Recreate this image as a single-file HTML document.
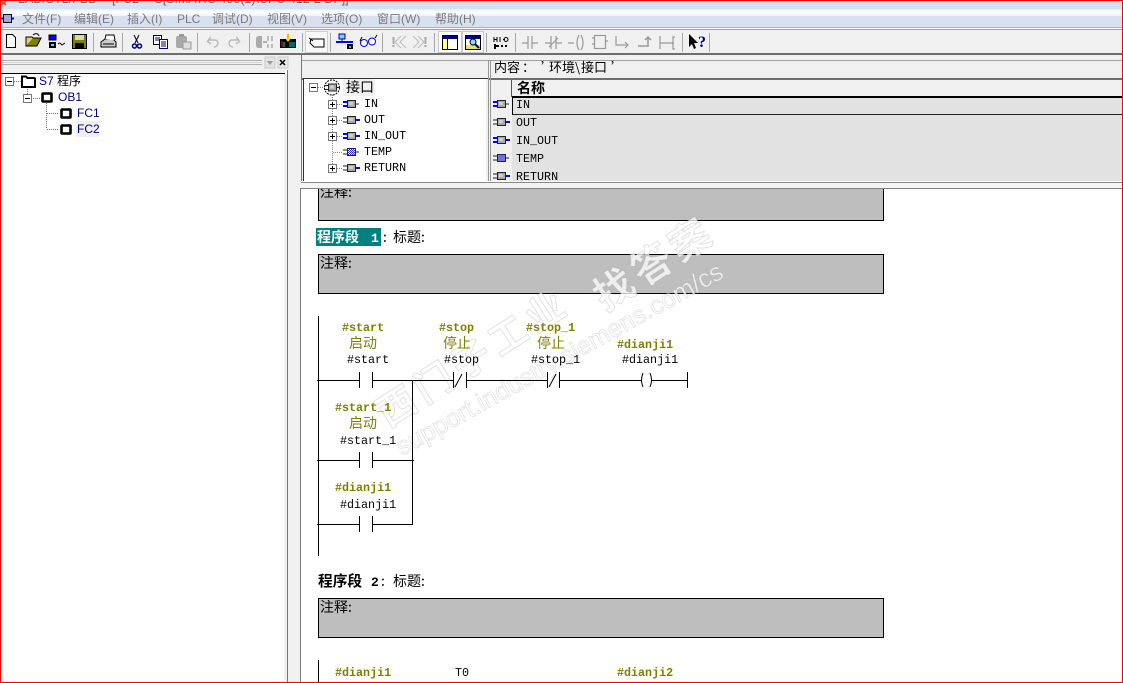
<!DOCTYPE html>
<html><head><meta charset="utf-8"><style>
html,body{margin:0;padding:0;background:#fff;width:1123px;height:683px;overflow:hidden}
svg{display:block;position:absolute;left:0;top:0}
text{white-space:pre}
.m{font:12px "Liberation Sans","Noto Sans CJK SC",sans-serif;fill:#7a7a7a}
.t{font:11.7px "Liberation Mono","Noto Sans CJK SC",monospace;fill:#000}
.b{font:bold 11.7px "Liberation Mono",monospace;fill:#808000}
.o{font:14px "WenQuanYi Zen Hei","Noto Sans CJK SC",sans-serif;fill:#808000}
.c{font:14px "WenQuanYi Zen Hei","Noto Sans CJK SC",sans-serif;fill:#000}
.s{font:12px "Liberation Sans","Noto Sans CJK SC",sans-serif;fill:#000080}
.l{stroke:#000;stroke-width:1;fill:none;shape-rendering:crispEdges}
.wm{fill:rgba(255,255,255,.75);stroke:rgba(150,150,150,.28);stroke-width:1;font-family:"Liberation Sans","Noto Sans CJK SC",sans-serif}
</style></head><body>
<svg width="1123" height="683" viewBox="0 0 1123 683" xmlns="http://www.w3.org/2000/svg">
<defs>
<linearGradient id="gl" x1="0" y1="0" x2="0" y2="1"><stop offset="0" stop-color="#e4edf5"/><stop offset=".45" stop-color="#fff"/><stop offset="1" stop-color="#eef1f9"/></linearGradient>
<g id="pin"><rect x="4.500" y="1.500" width="8" height="7" fill="#a8a8a8" stroke="#222" shape-rendering="crispEdges"/><rect x="6" y="3" width="4" height="3" fill="#d0d0d0"/><path d="M0 3h4M0 7h4M13 5h3" stroke="#222" fill="none" shape-rendering="crispEdges"/></g>
<g id="pinl"><path d="M0 3h5M0 7h5" stroke="#00f" stroke-width="2" fill="none" shape-rendering="crispEdges"/></g>
<g id="pinr"><path d="M12 5h5" stroke="#00f" stroke-width="2" fill="none" shape-rendering="crispEdges"/></g>
<pattern id="chk" width="2" height="2" patternUnits="userSpaceOnUse"><rect width="2" height="2" fill="#fff"/><rect width="1" height="1" fill="#22c"/><rect x="1" y="1" width="1" height="1" fill="#22c"/></pattern>
<g id="plus"><rect x=".5" y=".5" width="8" height="8" fill="#fff" stroke="#777" shape-rendering="crispEdges"/><path d="M2 4.500h5M4.500 2v5" stroke="#000" shape-rendering="crispEdges"/></g>
<g id="minus"><rect x=".5" y=".5" width="8" height="8" fill="#fff" stroke="#777" shape-rendering="crispEdges"/><path d="M2 4.500h5" stroke="#000" shape-rendering="crispEdges"/></g>
<rect id="sq" x="1.500" y="1.500" width="9" height="8" rx=".5" fill="#fff" stroke="#000" stroke-width="2.600"/>
</defs>

<!-- background -->
<rect width="1123" height="683" fill="#fff"/>
<rect y="0" width="1123" height="9" fill="#d6e2ee"/>
<rect y="9" width="1123" height="7" fill="url(#gl)"/>
<rect y="16" width="1123" height="11" fill="#d9e0f0"/>
<rect y="27" width="1123" height="1" fill="#b0b0b8"/>
<rect y="28" width="1123" height="1" fill="#fafafa"/>
<rect y="29" width="1123" height="1" fill="#a0a0a0"/>
<rect y="30" width="1123" height="23" fill="#f0f0f0"/>
<rect y="53" width="1123" height="2" fill="#6e6e6e"/>
<rect y="55" width="1123" height="134" fill="#f0f0f0"/>
<rect x="289" y="60" width="834" height="1" fill="#a0a0a0"/>
<rect x="289" y="78" width="834" height="2" fill="#6e6e6e"/>
<rect x="288" y="55" width="13" height="628" fill="#f0f0f0"/>

<!-- title -->
<text x="18" y="3" style="font:12.500px 'Liberation Sans',sans-serif;fill:#666">LAD/STL/FBD</text>
<text x="112" y="3" style="font:12.500px 'Liberation Sans',sans-serif;fill:#666">[FC2 -- S[SIMATIC 400(1)\CPU 412-2 DP]]</text>
<path d="M1 1l5 4M6 1l-5 4" stroke="#b85020" stroke-width="1.500"/>

<!-- menu -->
<rect x="3.500" y="14.500" width="8" height="8" fill="#a8a8c8" stroke="#111" shape-rendering="crispEdges"/>
<path d="M1 18.500h2.500M11.500 18.500h2.500" stroke="#00f" stroke-width="2"/>
<text class="m" x="22" y="23">文件(F)</text>
<text class="m" x="74" y="23">编辑(E)</text>
<text class="m" x="127" y="23">插入(I)</text>
<text class="m" x="177" y="23">PLC</text>
<text class="m" x="212" y="23">调试(D)</text>
<text class="m" x="267" y="23">视图(V)</text>
<text class="m" x="321" y="23">选项(O)</text>
<text class="m" x="377" y="23">窗口(W)</text>
<text class="m" x="435" y="23">帮助(H)</text>

<!-- toolbar separators -->
<g fill="#a8a8a8">
<rect x="93" y="33" width="1" height="19"/><rect x="122" y="33" width="1" height="19"/><rect x="197" y="33" width="1" height="19"/><rect x="249" y="33" width="1" height="19"/><rect x="302" y="33" width="1" height="19"/><rect x="330" y="33" width="1" height="19"/><rect x="382" y="33" width="1" height="19"/><rect x="434" y="33" width="1" height="19"/><rect x="486" y="33" width="1" height="19"/><rect x="515" y="33" width="1" height="19"/><rect x="682" y="33" width="1" height="19"/><rect x="709" y="33" width="1" height="19"/>
</g>

<!-- toolbar icons -->
<path d="M6.500 34.500h6l3 3v10h-9z" fill="#fff" stroke="#000"/>
<path d="M26 46l3-8h12l-4 8z" fill="#808000" stroke="#000"/><path d="M26 46v-9h6l1 1" fill="#e0d070" stroke="#000"/><path d="M33 35c2-2 5-2 6 1" stroke="#000" fill="none"/>
<rect x="49" y="35" width="7" height="5" fill="#00f" stroke="#000"/><rect x="49" y="42" width="7" height="6" fill="#000"/><rect x="51" y="44" width="3" height="2" fill="#0ff"/><path d="M58 44c2-2 3 0 4 1l3-2" stroke="#000" fill="none"/>
<rect x="72.500" y="34.500" width="14" height="14" fill="#808000" stroke="#000"/><rect x="75" y="35" width="9" height="5" fill="#d8d8b0"/><rect x="75" y="43" width="9" height="5" fill="#000"/>
<path d="M101 42l4-3h8l3 3v5h-15z" fill="#ccc" stroke="#000"/><path d="M105 39l1-4h8l1 5" fill="#fff" stroke="#000"/><path d="M103 44h11" stroke="#000"/>
<path d="M134 35l4 8M139 35l-4 8" stroke="#000"/><circle cx="134.500" cy="46" r="2" fill="none" stroke="#00008b" stroke-width="1.500"/><circle cx="139.500" cy="46" r="2" fill="none" stroke="#00008b" stroke-width="1.500"/>
<rect x="153.500" y="35.500" width="8" height="9" fill="#fff" stroke="#000"/><rect x="159.500" y="39.500" width="8" height="9" fill="#fff" stroke="#000080"/><path d="M155 38h5M155 40h4M161 42h5M161 44h5M161 46h5" stroke="#000080"/>
<rect x="176" y="36" width="11" height="12" rx="2" fill="#a8a8a8"/><rect x="183" y="42" width="8" height="7" fill="#ddd" stroke="#999"/><rect x="179" y="34" width="5" height="3" fill="#999"/>
<path d="M207 42l3-4v2h5c4 0 4 7-1 7M207 41l4 3" stroke="#bbb" stroke-width="1.500" fill="none"/>
<path d="M240 42l-3-4v2h-5c-4 0-4 7 1 7M240 41l-4 3" stroke="#bbb" stroke-width="1.500" fill="none"/>
<path d="M262 36h-3q-3 0-3 3v6q0 3 3 3h3z" fill="#aaa"/><path d="M263 42h4" stroke="#aaa" stroke-width="2"/><path d="M268 36v5M272 36v5M268 44v4M272 44v4" stroke="#aaa" stroke-width="1.500"/>
<rect x="280" y="39" width="16" height="9" fill="#000"/><path d="M288 34v6" stroke="#e8c000" stroke-width="2"/><path d="M285 38l3 4 3-4z" fill="#ffe000"/><path d="M282 41v6" stroke="#f00"/><path d="M284 42v5M290 42v5M292 42v5M294 42v5" stroke="#0cc"/>
<rect x="305.500" y="31.500" width="22" height="21" fill="#f8f8f8" stroke="#d0d0d0"/><path d="M311 39h13v8h-10l-4-4z" fill="#fff" stroke="#000"/><path d="M309 38l4 3" stroke="#000"/>
<rect x="339" y="34" width="6" height="5" fill="#8cf" stroke="#00008b"/><rect x="336" y="41" width="17" height="2" fill="#00f"/><path d="M342 39v3" stroke="#00f"/><rect x="347" y="44" width="6" height="5" fill="#000"/><rect x="349" y="46" width="2" height="2" fill="#0cc"/>
<circle cx="364" cy="43" r="3.500" fill="#fff" stroke="#00f"/><circle cx="372" cy="41.500" r="3.500" fill="#fff" stroke="#00f"/><path d="M360 41l2-4M375 38l2-3" stroke="#000"/>
<text x="391" y="47" style="font:bold 15px 'Liberation Sans',sans-serif;fill:#aaa">!</text>
<path d="M401 36l-6 6 6 6M406 36l-6 6 6 6M413 36l6 6-6 6M418 36l6 6-6 6" stroke="#bbb" fill="none"/>
<text x="423" y="47" style="font:bold 15px 'Liberation Sans',sans-serif;fill:#aaa">!</text>
<rect x="438.500" y="31.500" width="23" height="21" fill="#fbfbfb" stroke="#c8c8c8"/>
<rect x="462.500" y="31.500" width="21" height="21" fill="#fbfbfb" stroke="#c8c8c8"/>
<rect x="442.500" y="35.500" width="15" height="14" fill="#fff" stroke="#000"/><rect x="443" y="36" width="14" height="3" fill="#00008b"/><rect x="443" y="39" width="4" height="10" fill="#ffff80"/><path d="M447.500 39v10" stroke="#000"/>
<rect x="465.500" y="35.500" width="15" height="14" fill="#fff" stroke="#000"/><rect x="466" y="36" width="14" height="3" fill="#00008b"/><rect x="466" y="45" width="14" height="4" fill="#e8e060"/><circle cx="473" cy="42" r="3" fill="#8df" stroke="#000"/><path d="M475 44l4 4" stroke="#008" stroke-width="2"/>
<path d="M494 37v5M497 37v5M494 39.500h3M500 37v5M503 39.500h2" stroke="#000"/><circle cx="506" cy="39.500" r="2" fill="none" stroke="#000"/>
<rect x="494" y="44" width="2" height="5" fill="#000"/><path d="M496 46h3M501 46h2M505 46h2" stroke="#000" stroke-width="2"/>
<g stroke="#999" fill="none" stroke-width="1.200">
<path d="M522 43h6M528 36v13M532 36v13M532 43h6"/>
<path d="M545 43h6M551 36v13M556 36v13M556 43h6M549 47l9-9"/>
<path d="M568 43h6M579 35q-4 8 0 15M581 35q4 8 0 15"/>
<rect x="594.500" y="35.500" width="11" height="13"/><path d="M592 38h2M592 44h2M606 41h2"/>
<path d="M616 36v9h12M625 42l3 3-3 3"/>
<path d="M638 46h10v-9M645 40l3-3 3 3" stroke-width="1.500"/>
<path d="M660 36v13M660 43h14M675 37h-2v12h2"/>
</g>
<text x="698" y="47" style="font:bold 16px 'Liberation Serif',serif;fill:#000080">?</text>
<path d="M689 34v13l3-3 2 5 2-1-2-5h4z" fill="#000"/>

<!-- left pane -->
<rect x="2" y="60" width="260" height="1" fill="#b0b0b0"/><rect x="2" y="62" width="260" height="1" fill="#d8d8d8"/><rect x="2" y="64" width="260" height="1" fill="#b0b0b0"/>
<rect x="265" y="57" width="10" height="11" fill="#e4e4e4" stroke="#ccc"/><path d="M267 61h6l-3 4z" fill="#999"/>
<rect x="278" y="57" width="10" height="11" fill="#e8e8e8" stroke="#ccc"/><path d="M280 60l5 5M285 60l-5 5" stroke="#000" stroke-width="1.500"/>
<rect x="0" y="70" width="287" height="613" fill="#fff"/>
<rect x="0" y="69" width="285" height="4" fill="#f0f0f0"/>
<rect x="0" y="73" width="285" height="1" fill="#000"/>
<rect x="284" y="74" width="3" height="609" fill="#f0f0f0"/>
<rect x="287" y="70" width="1" height="613" fill="#777"/>
<path d="M14 81.500h7M27.500 87v7M33 98.500h8M46.500 103v26M47 113.500h12M47 129.500h12" stroke="#777" stroke-dasharray="1 1" fill="none" shape-rendering="crispEdges"/>
<use href="#minus" x="5" y="77"/>
<path d="M22 87V76.500h4l1.500 1.500h6.500q1 0 1 1v8z" fill="#fff" stroke="#000" stroke-width="2"/>
<text x="39" y="85" style="font:12px 'Liberation Sans','Noto Sans CJK SC',sans-serif;fill:#000"><tspan fill="#000080">S7</tspan> 程序</text>
<use href="#minus" x="23" y="94"/>
<use href="#sq" x="41" y="92"/><text class="s" x="58" y="101">OB1</text>
<use href="#sq" x="60" y="108"/><text class="s" x="77" y="117">FC1</text>
<rect x="76" y="121" width="23" height="16" fill="#f0f0f0"/>
<use href="#sq" x="60" y="124"/><text class="s" x="77" y="133">FC2</text>

<!-- upper right: separators -->
<rect x="301" y="55" width="1" height="128" fill="#777"/>
<rect x="303" y="78" width="185" height="103" fill="#fff"/>
<rect x="303" y="78" width="185" height="1" fill="#333"/>
<rect x="303" y="78" width="1" height="103" fill="#333"/>
<rect x="486" y="79" width="2" height="102" fill="#f0f0f0"/>
<rect x="488" y="60" width="1" height="122" fill="#999"/>
<rect x="490" y="60" width="1" height="122" fill="#999"/>
<g style="font:13px 'WenQuanYi Zen Hei','Noto Sans CJK SC',sans-serif;fill:#000">
<text x="494" y="72">内容</text><text x="522" y="72">：</text><text x="541" y="72">’</text><text x="549" y="72">环境</text><text x="575" y="72">\</text><text x="581" y="72">接口</text><text x="611" y="72">’</text>
</g>

<!-- interface tree -->
<path d="M318 87.500h7M332.500 95v73M337 104.500h6M337 120.500h6M337 136.500h6M333 152.500h10M337 168.500h6" stroke="#888" stroke-dasharray="1 1" fill="none" shape-rendering="crispEdges"/>
<use href="#minus" x="309" y="83"/>
<circle cx="332" cy="87.500" r="7.500" fill="#fff" stroke="#000" stroke-dasharray="2 1"/>
<use href="#pin" x="324" y="82.500"/>
<rect x="343" y="79" width="32" height="17" fill="#f0f0f0"/>
<text class="c" x="346" y="92">接口</text>
<use href="#plus" x="328" y="100"/><use href="#plus" x="328" y="116"/><use href="#plus" x="328" y="132"/><use href="#plus" x="328" y="164"/>
<use href="#pin" x="343" y="99"/><use href="#pinl" x="343" y="99"/>
<use href="#pin" x="343" y="115"/><use href="#pinr" x="343" y="115"/>
<use href="#pin" x="343" y="131"/><use href="#pinl" x="343" y="131"/><use href="#pinr" x="343" y="131"/>
<use href="#pin" x="343" y="147"/><rect x="347.500" y="148.500" width="8" height="7" fill="url(#chk)" stroke="#224"/>
<use href="#pin" x="343" y="163"/><use href="#pinr" x="343" y="163"/>
<text class="t" x="364" y="107">IN</text><text class="t" x="364" y="123">OUT</text><text class="t" x="364" y="139">IN_OUT</text><text class="t" x="364" y="155">TEMP</text><text class="t" x="364" y="171">RETURN</text>

<!-- interface table -->
<rect x="491" y="78" width="632" height="103" fill="#f0f0f0"/>
<rect x="491" y="78" width="632" height="2" fill="#6e6e6e"/>
<rect x="512" y="80" width="611" height="101" fill="#e2e2e2"/>
<rect x="512" y="80" width="611" height="16" fill="#f0f0f0"/>
<rect x="511" y="80" width="1" height="17" fill="#555"/>
<rect x="512" y="96" width="611" height="2" fill="#000"/>
<rect x="512" y="114" width="611" height="1" fill="#222"/>
<rect x="512" y="97" width="1" height="18" fill="#000"/>
<text x="517" y="93" style="font:bold 14px 'WenQuanYi Zen Hei','Noto Sans CJK SC',sans-serif;fill:#000">名称</text>
<use href="#pin" x="493" y="99"/><use href="#pinl" x="493" y="99"/>
<use href="#pin" x="493" y="117"/><use href="#pinr" x="493" y="117"/>
<use href="#pin" x="493" y="135"/><use href="#pinl" x="493" y="135"/><use href="#pinr" x="493" y="135"/>
<use href="#pin" x="493" y="153"/><rect x="497.500" y="154.500" width="8" height="7" fill="#7070e0" stroke="#224"/>
<use href="#pin" x="493" y="171"/><use href="#pinr" x="493" y="171"/>
<text class="t" x="516" y="108">IN</text><text class="t" x="516" y="126">OUT</text><text class="t" x="516" y="144">IN_OUT</text><text class="t" x="516" y="162">TEMP</text><text class="t" x="516" y="180">RETURN</text>
<rect x="491" y="181" width="632" height="2" fill="#fff"/>

<!-- code area -->
<rect x="300" y="188" width="1" height="495" fill="#808080"/>
<rect x="301" y="189" width="822" height="494" fill="#fff"/>

<!-- comment boxes -->
<path d="M318.500 189V220.500H883.500V189z" fill="#bebebe"/>
<path d="M318.500 189V220.500H883.500V189" fill="none" stroke="#000" shape-rendering="crispEdges"/>
<text class="c" x="320" y="197">注释:</text>
<rect x="301" y="181" width="822" height="1" fill="#fff"/>
<rect x="301" y="182" width="822" height="1" fill="#888"/>
<rect x="301" y="183" width="822" height="5" fill="#f4f4f4"/>
<rect x="301" y="188" width="822" height="1" fill="#808080"/>
<rect x="318.500" y="254.500" width="565" height="39" fill="#bebebe" stroke="#000" shape-rendering="crispEdges"/>
<text class="c" x="320" y="268">注释:</text>
<rect x="318.500" y="598.500" width="565" height="39" fill="#bebebe" stroke="#000" shape-rendering="crispEdges"/>
<text class="c" x="320" y="612">注释:</text>

<!-- watermark -->
<g class="wm">
<text transform="translate(402,456) rotate(-29)" font-size="25.500" stroke-width=".8">support.industry.siemens.com/cs</text>
<text transform="translate(388,428) rotate(-32.500)" font-size="38" font-weight="bold" letter-spacing="6">西门子工业</text>
<text transform="translate(605,312) rotate(-33)" font-size="40" font-weight="bold" letter-spacing="5">找答案</text>
</g>

<!-- network titles -->
<rect x="316" y="228" width="65" height="18" fill="#008080"/>
<text x="317" y="242" style="font:bold 14px 'WenQuanYi Zen Hei','Noto Sans CJK SC',sans-serif;fill:#fff">程序段</text>
<text x="371" y="242" style="font:bold 13px 'Liberation Mono',monospace;fill:#fff">1</text>
<text class="c" x="383" y="242">:</text><text class="c" x="393" y="242">标题</text><text class="c" x="421" y="242">:</text>
<text x="318" y="586" style="font:bold 14.700px 'WenQuanYi Zen Hei','Noto Sans CJK SC',sans-serif;fill:#000">程序段</text>
<text x="371" y="586" style="font:bold 13px 'Liberation Mono',monospace;fill:#000">2</text>
<text class="c" x="381" y="586">:</text><text class="c" x="393" y="586">标题</text><text class="c" x="421" y="586">:</text>

<!-- ladder -->
<g class="l">
<path d="M318.500 316v240"/>
<path d="M317 380.500h42M372 380.500h81M466 380.500h81M560 380.500h82M652 380.500h35"/>
<path d="M359.500 372v16M372.500 372v16M453.500 372v16M466.500 372v16M547.500 372v16M559.500 372v16M687.500 372v16"/>
<path d="M412.500 380v145"/>
<path d="M317 460.500h42M372 460.500h42M359.500 452v16M372.500 452v16"/>
<path d="M317 524.500h42M372 524.500h41M359.500 516v16M372.500 516v16"/>
<path d="M318.500 660v23"/>
</g>
<path d="M455 387l7-13M549 387l7-13" stroke="#000" fill="none"/>
<path d="M643 373q-3 7 0 14M650 373q3 7 0 14" stroke="#000" fill="none"/>

<text class="b" x="342" y="331">#start</text><text class="o" x="349" y="348">启动</text><text class="t" x="347" y="363">#start</text>
<text class="b" x="439" y="331">#stop</text><text class="o" x="443" y="348">停止</text><text class="t" x="444" y="363">#stop</text>
<text class="b" x="526" y="331">#stop_1</text><text class="o" x="537" y="348">停止</text><text class="t" x="531" y="363">#stop_1</text>
<text class="b" x="617" y="348">#dianji1</text><text class="t" x="622" y="363">#dianji1</text>
<text class="b" x="335" y="411">#start_1</text><text class="o" x="349" y="428">启动</text><text class="t" x="340" y="444">#start_1</text>
<text class="b" x="335" y="491">#dianji1</text><text class="t" x="340" y="508">#dianji1</text>
<text class="b" x="335" y="676">#dianji1</text><text class="t" x="455" y="676">T0</text><text class="b" x="617" y="676">#dianji2</text>

<!-- red frame -->
<rect x=".5" y=".5" width="1122" height="682" fill="none" stroke="#f00" shape-rendering="crispEdges"/>
</svg>
</body></html>
